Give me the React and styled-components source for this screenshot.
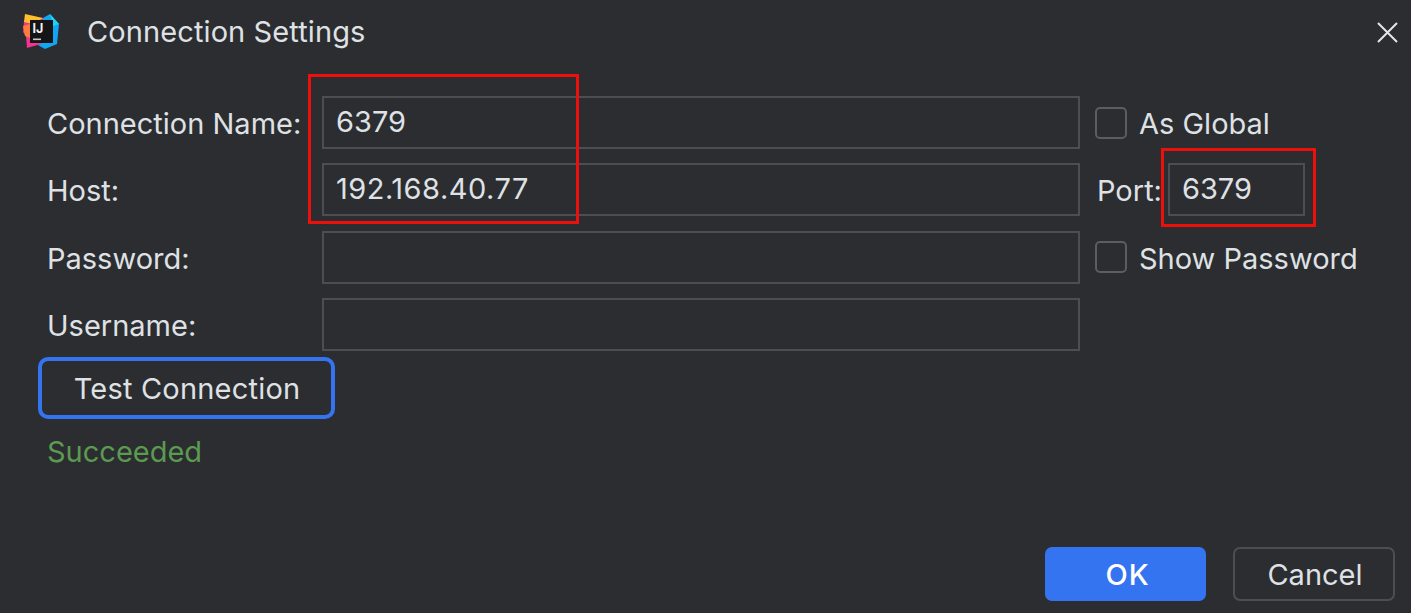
import React from 'react';
import styled, { createGlobalStyle } from 'styled-components';

const GlobalStyle = createGlobalStyle`
  html, body {
    margin: 0;
    padding: 0;
    background: #2b2d30;
  }
  body {
    font-family: Inter, "Noto Sans", sans-serif;
    color: #dfe1e5;
    overflow: hidden;
  }
`;

const Dialog = styled.div`
  position: relative;
  width: 1411px;
  height: 613px;
  background: #2b2d30;
  display: flex;
  flex-direction: column;
  box-sizing: border-box;
`;

const TitleBar = styled.div`
  height: 64px;
  display: flex;
  align-items: center;
  padding: 0 12px 0 23px;
  flex-shrink: 0;
`;

const Title = styled.div`
  font-size: 29px;
  letter-spacing: 0.1px;
  margin-left: 27px;
  padding-bottom: 2px;
  flex: 1;
  color: #dfe1e5;
`;

const CloseButton = styled.button`
  background: none;
  border: 0;
  padding: 0;
  width: 24px;
  height: 24px;
  display: flex;
  color: #e4e6ea;
`;

const Form = styled.div`
  display: grid;
  grid-template-columns: 275px 758px 1fr;
  grid-auto-rows: 53px;
  row-gap: 14.33px;
  padding: 32px 0 0 47px;
  align-items: center;
`;

const Label = styled.label`
  font-size: 29px;
  line-height: 1;
  padding-top: 2px;
`;

const Input = styled.div`
  box-sizing: border-box;
  height: 53px;
  border: 2px solid #4c4e53;
  display: flex;
  align-items: center;
  padding: 0 12px 3px;
  font-size: 29px;
  letter-spacing: ${(p) => p.$spacing || 0}px;
  width: ${(p) => p.$width || '100%'};
`;

const Side = styled.div`
  display: flex;
  align-items: center;
  padding-left: 15px;
  font-size: 29px;
`;

const Box = styled.span`
  box-sizing: border-box;
  width: 32px;
  height: 32px;
  border: 2px solid #5a5d63;
  border-radius: 5px;
  margin-right: 12px;
`;

const SideText = styled.span`
  padding-top: 2px;
`;

const PortLabel = styled.span`
  margin: 0 6px 0 2px;
  padding-top: 1px;
`;

const TestRow = styled.div`
  padding: 6px 0 0 38px;
`;

const TestButton = styled.button`
  box-sizing: border-box;
  width: 297px;
  height: 62px;
  background: #2b2d30;
  border: 4px solid #3574f0;
  border-radius: 10px;
  color: #dfe1e5;
  font: inherit;
  font-size: 29px;
  letter-spacing: 0.2px;
  padding: 1px 0 0 1px;
`;

const Status = styled.div`
  font-size: 29px;
  color: #5b9a50;
  padding: 15px 0 0 47px;
`;

const Footer = styled.div`
  margin-top: auto;
  display: flex;
  justify-content: flex-end;
  gap: 27px;
  padding: 0 16px 12px 0;
`;

const FooterButton = styled.button`
  box-sizing: border-box;
  width: ${(p) => (p.$primary ? '161px' : '162px')};
  height: 54px;
  border-radius: 7px;
  font: inherit;
  font-size: 29px;
  padding: 0 0 0 ${(p) => (p.$primary ? 4 : 2)}px;
  font-weight: ${(p) => (p.$primary ? 500 : 400)};
  letter-spacing: ${(p) => (p.$primary ? 1 : 0)}px;
  color: ${(p) => (p.$primary ? '#ffffff' : '#dfe1e5')};
  background: ${(p) => (p.$primary ? '#3574f0' : 'transparent')};
  border: 2px solid ${(p) => (p.$primary ? '#3574f0' : '#4c4e53')};
`;

const Annotation = styled.div`
  position: absolute;
  box-sizing: border-box;
  border: 3px solid #ec0f0b;
  left: ${(p) => p.$x}px;
  top: ${(p) => p.$y}px;
  width: ${(p) => p.$w}px;
  height: ${(p) => p.$h}px;
  pointer-events: none;
`;

const Logo = () => (
  <svg width="37" height="36" viewBox="0 0 37 36">
    <polygon points="20,4 27,0 36,10 34,30 22,35 13,30" fill="#12a5f2" />
    <polygon points="1,7 20,4 18,30 4,34 3,22 0,18" fill="#f2338f" />
    <polygon points="2,0 20,4 10,10 1,8" fill="#ffc02e" />
    <polygon points="0,12 7,10 7,24 2,22" fill="#fb7d3a" />
    <polygon points="27,0 36,10 30,12" fill="#1fd3f0" />
    <rect x="7" y="6" width="23" height="23" fill="#151417" />
    <text x="9.5" y="18.5" fontFamily="Inter, sans-serif" fontWeight="700" fontSize="12.5" fill="#f2f2f2">IJ</text>
    <rect x="10" y="24.5" width="8" height="1.6" fill="#c9c9c9" />
  </svg>
);

const CloseIcon = () => (
  <svg width="24" height="24" viewBox="0 0 24 24" stroke="currentColor" strokeWidth="2" fill="none">
    <path d="M3 3 L22 22 M22 3 L3 22" />
  </svg>
);

export default function App() {
  return (
    <Dialog>
      <GlobalStyle />
      <TitleBar>
        <Logo />
        <Title>Connection Settings</Title>
        <CloseButton><CloseIcon /></CloseButton>
      </TitleBar>
      <Form>
        <Label>Connection Name:</Label>
        <Input>6379</Input>
        <Side><Box /><SideText>As Global</SideText></Side>

        <Label>Host:</Label>
        <Input $spacing={0.5}>192.168.40.77</Input>
        <Side>
          <PortLabel>Port:</PortLabel>
          <Input $width="137px">6379</Input>
        </Side>

        <Label>Password:</Label>
        <Input />
        <Side><Box /><SideText>Show Password</SideText></Side>

        <Label>Username:</Label>
        <Input />
      </Form>
      <TestRow><TestButton>Test Connection</TestButton></TestRow>
      <Status>Succeeded</Status>
      <Footer>
        <FooterButton $primary>OK</FooterButton>
        <FooterButton>Cancel</FooterButton>
      </Footer>
      <Annotation $x={308} $y={74} $w={271} $h={150} />
      <Annotation $x={1161} $y={148} $w={155} $h={79} />
    </Dialog>
  );
}
